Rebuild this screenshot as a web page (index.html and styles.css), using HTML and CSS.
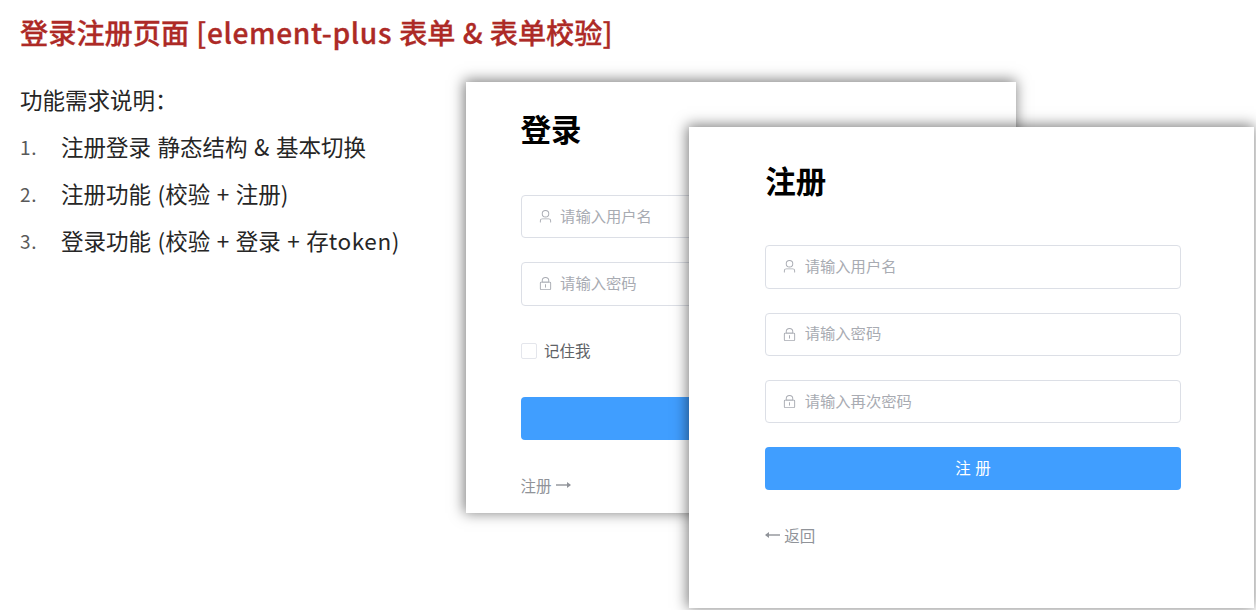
FILE: index.html
```
<!DOCTYPE html>
<html lang="zh-CN">
  <head>
    <meta charset="UTF-8" />
    <meta name="viewport" content="width=device-width, initial-scale=1.0" />
    <title>登录注册页面</title>
    <link rel="stylesheet" href="styles.css">
  </head>
  <body>
    <svg class="sprite" width="0" height="0">
      <symbol id="user" viewBox="0 0 1024 1024">
        <path fill="currentColor" d="M512 512a192 192 0 1 0 0-384 192 192 0 0 0 0 384zm0 64a256 256 0 1 1 0-512 256 256 0 0 1 0 512zm320 320v-96a96 96 0 0 0-96-96H288a96 96 0 0 0-96 96v96a32 32 0 1 1-64 0v-96a160 160 0 0 1 160-160h448a160 160 0 0 1 160 160v96a32 32 0 1 1-64 0z" />
      </symbol>
      <symbol id="lock" viewBox="0 0 1024 1024">
        <path fill="currentColor" d="M224 448a32 32 0 0 0-32 32v384a32 32 0 0 0 32 32h576a32 32 0 0 0 32-32V480a32 32 0 0 0-32-32H224zm0-64h576a96 96 0 0 1 96 96v384a96 96 0 0 1-96 96H224a96 96 0 0 1-96-96V480a96 96 0 0 1 96-96z" />
        <path fill="currentColor" d="M512 544a32 32 0 0 1 32 32v192a32 32 0 1 1-64 0V576a32 32 0 0 1 32-32zm192-160v-64a192 192 0 1 0-384 0v64h384zM512 64a256 256 0 0 1 256 256v128H256V320A256 256 0 0 1 512 64z" />
      </symbol>
    </svg>

    <div class="page">
      <h1 class="title">登录注册页面 <span class="titleEn">[element-plus</span> 表单 &amp; 表单校验]</h1>

      <div class="content">
        <div class="desc">
          <p>功能需求说明：</p>
          <ol class="list">
            <li><span class="num">1.</span>注册登录 静态结构 &amp; 基本切换</li>
            <li><span class="num">2.</span>注册功能 (校验 + 注册)</li>
            <li><span class="num">3.</span>登录功能 (校验 + 登录 + 存<span class="token">token)</span></li>
          </ol>
        </div>

        <div class="cards">
          <form class="card login">
            <h2>登录</h2>
            <label class="field">
              <svg class="icon"><use href="#user" /></svg>
              <input type="text" placeholder="请输入用户名" />
            </label>
            <label class="field">
              <svg class="icon"><use href="#lock" /></svg>
              <input type="password" placeholder="请输入密码" />
            </label>
            <label class="remember">
              <input type="checkbox" />
              <span>记住我</span>
            </label>
            <button type="button" class="btn">登录</button>
            <a class="link">
              注册
              <svg class="arrow" viewBox="0 0 15 8"><path d="M0 4H14" /><path class="head" d="M11 1L15 4L11 7z" /></svg>
            </a>
          </form>

          <form class="card register">
            <h2>注册</h2>
            <label class="field">
              <svg class="icon"><use href="#user" /></svg>
              <input type="text" placeholder="请输入用户名" />
            </label>
            <label class="field">
              <svg class="icon"><use href="#lock" /></svg>
              <input type="password" placeholder="请输入密码" />
            </label>
            <label class="field">
              <svg class="icon"><use href="#lock" /></svg>
              <input type="password" placeholder="请输入再次密码" />
            </label>
            <button type="button" class="btn">注册</button>
            <a class="link">
              <svg class="arrow" viewBox="0 0 15 8"><path d="M15 4H1" /><path class="head" d="M4 1L0 4L4 7z" /></svg>
              返回
            </a>
          </form>
        </div>
      </div>
    </div>
  </body>
</html>
```

FILE: styles.css
```
* {
  margin: 0;
  padding: 0;
  box-sizing: border-box;
}

body {
  font-family: "Noto Sans CJK SC", sans-serif;
  background: #fff;
  color: #262626;
}

.sprite {
  display: block;
}

.page {
  height: 610px;
  overflow: hidden;
}

.title {
  height: 82px;
  padding: 8px 0 0 20px;
  font-size: 28.2px;
  line-height: 48px;
  font-weight: 500;
  color: #ad2a26;
  white-space: nowrap;
  word-spacing: 0.8px;
  -webkit-text-stroke: 0.3px #ad2a26;
}

.titleEn {
  letter-spacing: 0.6px;
}

.content {
  display: flex;
}

.desc {
  width: 466px;
  padding-left: 20px;
  font-size: 22.5px;
  line-height: 47px;
  white-space: nowrap;
}

.desc p {
  margin-top: -6px;
}

.list {
  list-style: none;
  word-spacing: 1.5px;
}

.list li {
  display: flex;
}

.num {
  width: 41px;
  font-size: 19px;
  letter-spacing: 0.6px;
  color: #595959;
}

.token {
  letter-spacing: 0.6px;
}

.cards {
  display: grid;
  justify-items: start;
  align-items: start;
}

/* both cards share one cell, the second one is shifted over the first */
.card {
  grid-area: 1 / 1;
  display: flex;
  flex-direction: column;
  background: #fff;
  box-shadow: -1px -1px 13px 1px rgba(0, 0, 0, 0.5);
}

.login {
  width: 550px;
  height: 431px;
  padding: 24px 0 0 54.6px;
}

.register {
  width: 565px;
  height: 481px;
  margin: 45px 0 0 223px;
  padding: 31px 0 0 76.2px;
}

.card h2 {
  height: 89px;
  font-size: 30.5px;
  line-height: 44px;
  font-weight: 700;
  color: #000;
}

.register h2 {
  height: 87.3px;
}

.field {
  display: flex;
  align-items: center;
  width: 416px;
  height: 43.3px;
  margin-bottom: 24px;
  padding-left: 16px;
  border: 1px solid #dcdfe6;
  border-radius: 4px;
}

.icon {
  width: 15px;
  height: 15px;
  margin-right: 7.5px;
  color: #a8abb2;
}

.field input {
  flex: 1;
  height: 24px;
  margin-bottom: 4px;
  border: 0;
  outline: none;
  background: none;
  font-family: inherit;
  font-size: 15.3px;
}

.field input::placeholder {
  color: #a8abb2;
}

.remember {
  display: flex;
  align-items: center;
  height: 43.3px;
  margin-bottom: 24px;
  font-size: 15.5px;
  color: #606266;
}

.remember input {
  appearance: none;
  width: 16px;
  height: 16px;
  margin-right: 7.5px;
  border: 1px solid #e4e6ec;
  border-radius: 2px;
}

.remember span {
  margin-bottom: 2px;
}

.btn {
  width: 416px;
  height: 43.3px;
  padding: 0 0 4px 4px;
  border: 0;
  border-radius: 4px;
  background: #409eff;
  color: #fff;
  font-family: inherit;
  font-size: 15.5px;
  letter-spacing: 4.5px;
}

.link {
  display: flex;
  align-items: center;
  gap: 4px;
  margin-top: 32px;
  font-size: 15.5px;
  line-height: 26px;
  color: #909399;
}

.arrow {
  width: 15px;
  height: 8px;
  fill: none;
  stroke: currentColor;
  stroke-width: 1.4;
}

.head {
  fill: currentColor;
  stroke: none;
}
```
